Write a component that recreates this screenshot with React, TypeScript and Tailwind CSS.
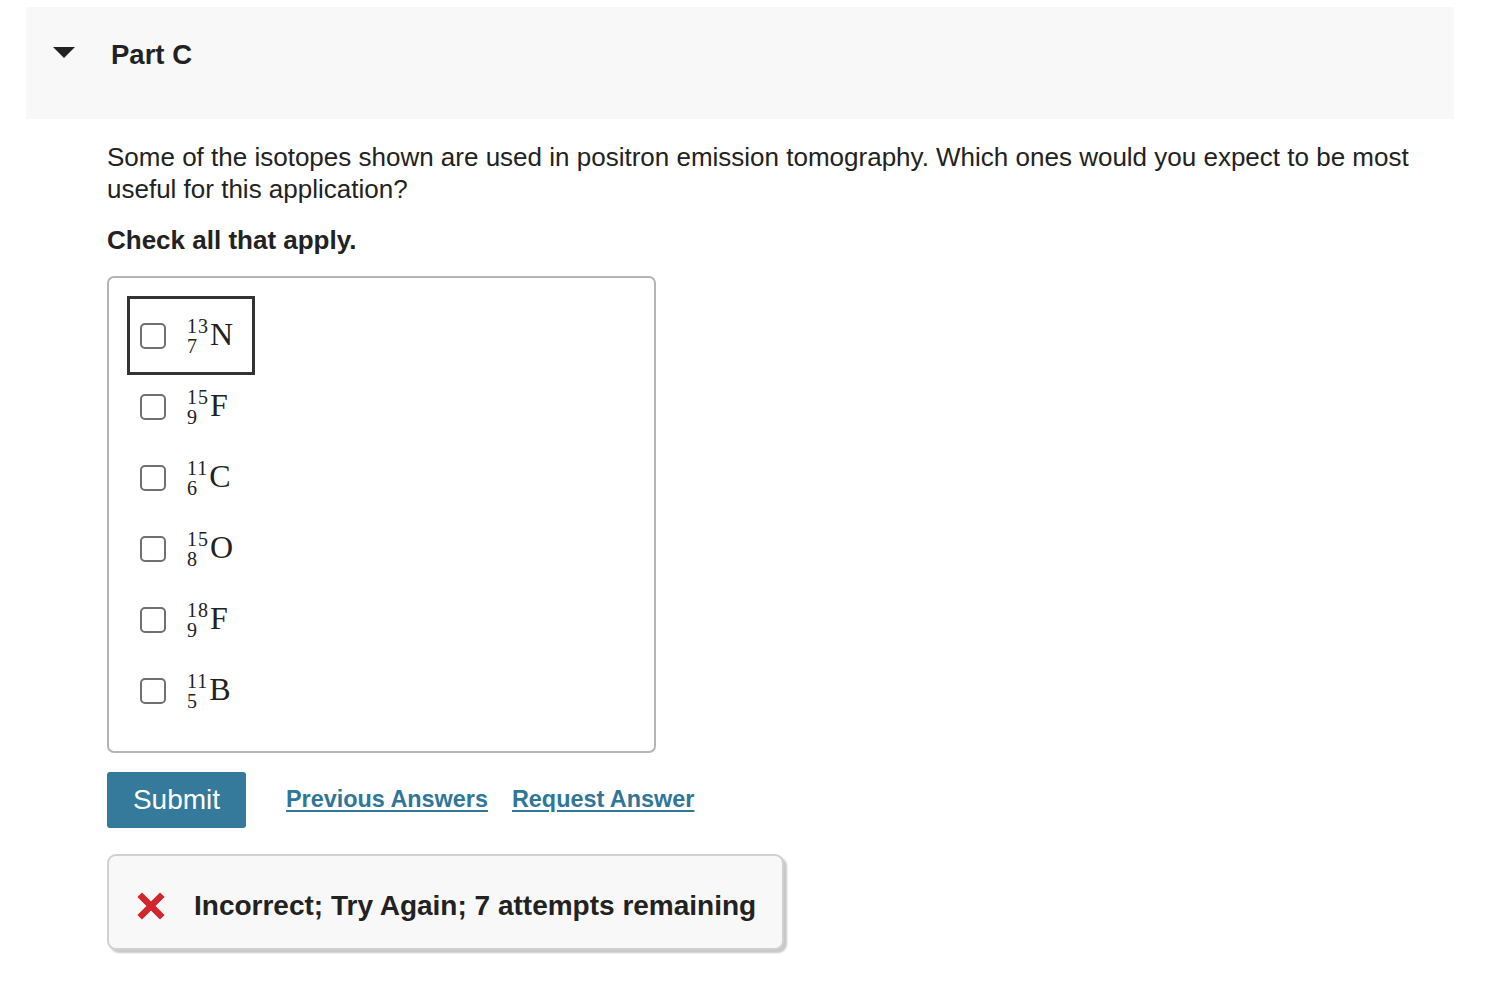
import React from 'react';

const isotopes = [
  { mass: '13', atomic: '7', symbol: 'N' },
  { mass: '15', atomic: '9', symbol: 'F' },
  { mass: '11', atomic: '6', symbol: 'C' },
  { mass: '15', atomic: '8', symbol: 'O' },
  { mass: '18', atomic: '9', symbol: 'F' },
  { mass: '11', atomic: '5', symbol: 'B' },
];

function Isotope({ mass, atomic, symbol }: { mass: string; atomic: string; symbol: string }) {
  return (
    <span className="inline-flex items-center font-['Liberation_Serif','DejaVu_Serif',serif] text-[#222]">
      <span className="flex flex-col items-start text-[20px] leading-[20px] tracking-[1px]">
        <span>{mass}</span>
        <span>{atomic}</span>
      </span>
      <span className="text-[32px] leading-none ml-[1px] -mt-[3px]">{symbol}</span>
    </span>
  );
}

function RedCross() {
  return (
    <svg width="28" height="28" viewBox="0 0 28 28" className="shrink-0">
      <path d="M5 5 L23 23 M23 5 L5 23" stroke="#d1262b" strokeWidth="6.5" strokeLinecap="square" />
    </svg>
  );
}

export default function App() {
  return (
    <div className="min-h-screen bg-white pt-[7px] font-['Liberation_Sans',Arial,sans-serif] text-[#222]">
      {/* Part header */}
      <div className="mx-[26px] w-[1428px] h-[112px] bg-[#f8f8f8] flex items-start pt-[32px] pl-[27px]">
        <svg width="22" height="12" viewBox="0 0 22 12" className="mt-[8px]">
          <path d="M0 0 H22 L11 11 Z" fill="#222" />
        </svg>
        <span className="ml-[36px] text-[27.5px] font-bold leading-[32px]">Part C</span>
      </div>

      {/* Question */}
      <div className="pl-[107px] pr-[60px]">
        <p className="mt-[22px] text-[26px] leading-[32px] text-[#222]">
          Some of the isotopes shown are used in positron emission tomography. Which ones would you expect to be most useful for this application?
        </p>
        <p className="mt-[19px] text-[26px] font-bold leading-[32px]">Check all that apply.</p>

        {/* Options */}
        <div className="mt-[20px] w-[549px] h-[477px] border-2 border-[#b4b4b4] rounded-[7px] pt-[22px] pl-[22px]">
          {isotopes.map((iso, i) => (
            <div
              key={i}
              className={`flex items-center w-[120px] h-[71px] pl-[9px] gap-[21px] ${
                i === 0 ? 'outline-[3px] outline-solid outline-[#333] outline-offset-[1px]' : ''
              }`}
            >
              <span className="w-[26px] h-[26px] border-2 border-[#707070] rounded-[5px] bg-white shrink-0" />
              <Isotope {...iso} />
            </div>
          ))}
        </div>

        {/* Actions */}
        <div className="mt-[19px] flex items-center">
          <button className="w-[139px] h-[56px] bg-[#35799b] rounded-[3px] text-white text-[28px] leading-none">
            Submit
          </button>
          <a className="ml-[40px] text-[23.4px] font-bold text-[#2f7699] underline underline-offset-[3px] decoration-2">
            Previous Answers
          </a>
          <a className="ml-[24px] text-[23.4px] font-bold text-[#2f7699] underline underline-offset-[3px] decoration-2">
            Request Answer
          </a>
        </div>

        {/* Feedback */}
        <div className="mt-[26px] w-[677px] h-[96px] bg-[#f8f8f8] border-2 border-[#d0d0d0] rounded-[9px] shadow-[3px_3px_2px_#c8c8c8] flex items-center pl-[28px] pt-[7px]">
          <RedCross />
          <span className="ml-[29px] text-[28px] font-bold text-[#222]">
            Incorrect; Try Again; 7 attempts remaining
          </span>
        </div>
      </div>
    </div>
  );
}
